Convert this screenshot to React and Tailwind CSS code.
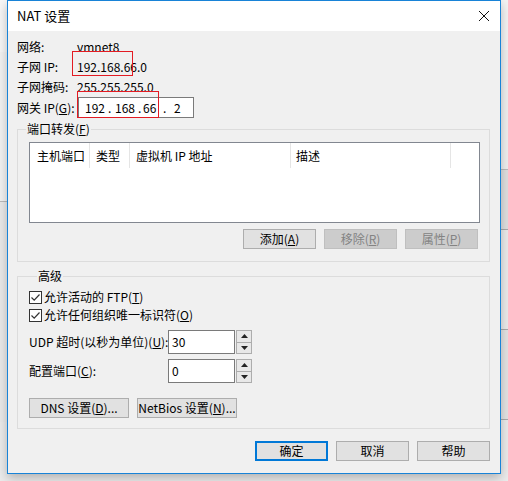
import React from "react";

const font = { fontFamily: '"Noto Sans CJK SC", "Noto Sans", sans-serif' };

function Btn({ children, disabled, primary, className = "" }) {
  let cls = "h-[20px] flex items-center justify-center whitespace-nowrap text-[12px] leading-none ";
  if (disabled) cls += "bg-[#cccccc] border border-[#bfbfbf] text-[#838383] ";
  else if (primary) cls += "bg-[#e1e1e1] border-2 border-[#0078d7] text-black ";
  else cls += "bg-[#e1e1e1] border border-[#adadad] text-black ";
  return <div className={cls + className}>{children}</div>;
}

function Check({ label }) {
  return (
    <div className="flex items-center h-[18px]">
      <div className="w-[13px] h-[13px] border border-[#333] bg-white flex items-center justify-center">
        <svg width="11" height="11" viewBox="0 0 11 11">
          <path d="M1.5 5.5 L4.2 8.2 L9.5 2.5" fill="none" stroke="#333" strokeWidth="1.2" />
        </svg>
      </div>
      <span className="ml-[2px] text-[12px] whitespace-nowrap">{label}</span>
    </div>
  );
}

function Spin({ value }) {
  return (
    <div className="flex h-[24px]">
      <div className="w-[67px] h-full bg-white border border-[#7a7a7a] flex items-center pl-[3px] text-[12px]">
        {value}
      </div>
      <div className="w-[16px] ml-[1px] h-full flex flex-col">
        <div className="flex-1 border border-[#adadad] bg-[#e8e8e8] flex items-center justify-center">
          <svg width="7" height="4" viewBox="0 0 7 4"><path d="M0 4 L3.5 0 L7 4Z" fill="#222" /></svg>
        </div>
        <div className="flex-1 border border-t-0 border-[#adadad] bg-[#e8e8e8] flex items-center justify-center">
          <svg width="7" height="4" viewBox="0 0 7 4"><path d="M0 0 L3.5 4 L7 0Z" fill="#222" /></svg>
        </div>
      </div>
    </div>
  );
}

export default function App() {
  return (
    <div className="w-[508px] h-[481px] relative overflow-hidden bg-[#ececec]" style={font}>
      {/* background app fragments */}
      <div className="flex flex-col w-[8px] text-[12px] text-[#333]">
        <div className="h-[52px] bg-[#f7f7f7]" />
        <div className="h-[150px] bg-[#f3f3f3] border-b border-[#bbb]" />
        <div className="h-[220px] bg-[#eaeaea]" />
      </div>
      <div className="absolute right-0 top-0 w-[8px] h-full flex flex-col">
        <div className="h-[50px] bg-[#f4f4f4]" />
        <div className="h-[120px] bg-[#f0f0f0] border-b border-[#bbb]" />
        <div className="h-[60px] bg-[#e0e0e0] border-b border-[#aaa]" />
        <div className="h-[100px] bg-[#ececec] border-b border-[#aaa]" />
        <div className="h-[90px] bg-[#e4e4e4] border-b border-[#aaa]" />
      </div>

      {/* dialog window */}
      <div className="absolute left-[7px] top-0 w-[494px] h-[474px] border border-[#1883d7] bg-[#f0f0f0] flex flex-col shadow-[0_4px_10px_rgba(0,0,0,0.25)]">
        <div className="h-[30px] bg-white flex items-center justify-between pl-[9px] pr-[10px] shrink-0">
          <span className="text-[13px] text-black">NAT 设置</span>
          <svg width="12" height="12" viewBox="0 0 12 12">
            <path d="M1 1 L11 11 M11 1 L1 11" stroke="#111" strokeWidth="1" />
          </svg>
        </div>

        <div className="pl-[9px] pt-[6px] text-[12px] text-black flex flex-col">
          <div className="flex items-center h-[20px]">
            <span className="w-[60px]">网络:</span>
            <span>vmnet8</span>
          </div>
          <div className="flex items-center h-[20px]">
            <span className="w-[60px]">子网 IP:</span>
            <span className="relative">
              192.168.66.0
              <span className="absolute left-[-5px] top-[-7px] w-[61px] h-[25px] border border-[#e31b23]" />
            </span>
          </div>
          <div className="flex items-center h-[20px]">
            <span className="w-[60px]">子网掩码:</span>
            <span>255.255.255.0</span>
          </div>
          <div className="flex items-center h-[21px]">
            <span className="w-[61px] whitespace-nowrap">网关 IP(<u>G</u>):</span>
            <div className="relative w-[116px] h-[21px] bg-white border border-[#7a7a7a] flex items-center pl-[6px] whitespace-nowrap">
              <span className="w-[23px]">192</span>
              <span className="w-[7px]">.</span>
              <span className="w-[23px]">168</span>
              <span className="w-[5px]">.</span>
              <span className="w-[20px]">66</span>
              <span className="w-[11px]">.</span>
              <span>2</span>
              <span className="absolute left-[-2px] top-[-7px] w-[82px] h-[27px] border border-[#e31b23]" />
            </div>
          </div>

          <fieldset className="mt-[3px] w-[473px] border border-[#dcdcdc] pb-[12px]">
            <legend className="ml-[8px] px-[1px] text-[12px] leading-[16px]">
              端口转发(<u>F</u>)
            </legend>
            <div className="ml-[11px] mt-[5px] w-[451px] h-[81px] bg-white border border-[#828790]">
              <div className="flex h-[25px] items-center whitespace-nowrap">
                <div className="w-[60px] pl-[7px] h-full flex items-center border-r border-[#e5e5e5]">主机端口</div>
                <div className="w-[40px] pl-[6px] h-full flex items-center border-r border-[#e5e5e5]">类型</div>
                <div className="w-[161px] pl-[6px] h-full flex items-center border-r border-[#e5e5e5]">虚拟机 IP 地址</div>
                <div className="w-[160px] pl-[5px] h-full flex items-center border-r border-[#e5e5e5]">描述</div>
              </div>
            </div>
            <div className="flex justify-end gap-[8px] mt-[6px] pr-[11px]">
              <Btn className="w-[73px]">添加(<u>A</u>)</Btn>
              <Btn disabled className="w-[73px]">移除(<u>R</u>)</Btn>
              <Btn disabled className="w-[73px]">属性(<u>P</u>)</Btn>
            </div>
          </fieldset>

          <fieldset className="mt-[6px] w-[473px] h-[161px] border border-[#dcdcdc] pl-[11px]">
            <legend className="ml-[8px] px-[1px] text-[12px] leading-[16px]">高级</legend>
            <div className="mt-[4px] flex flex-col">
              <Check label={<>允许活动的 FTP(<u>T</u>)</>} />
              <Check label={<>允许任何组织唯一标识符(<u>O</u>)</>} />
            </div>
            <div className="flex items-center mt-[6px]">
              <span className="w-[139px] whitespace-nowrap">UDP 超时(以秒为单位)(<u>U</u>):</span>
              <Spin value="30" />
            </div>
            <div className="flex items-center mt-[5px]">
              <span className="w-[139px] whitespace-nowrap">配置端口(<u>C</u>):</span>
              <Spin value="0" />
            </div>
            <div className="flex gap-[8px] mt-[15px]">
              <Btn className="w-[100px]">DNS 设置(<u>D</u>)...</Btn>
              <Btn className="w-[100px]">NetBios 设置(<u>N</u>)...</Btn>
            </div>
          </fieldset>

          <div className="flex justify-end gap-[8px] mt-[12px] pr-[10px]">
            <Btn primary className="w-[73px]">确定</Btn>
            <Btn className="w-[73px]">取消</Btn>
            <Btn className="w-[73px]">帮助</Btn>
          </div>
        </div>
      </div>
    </div>
  );
}
